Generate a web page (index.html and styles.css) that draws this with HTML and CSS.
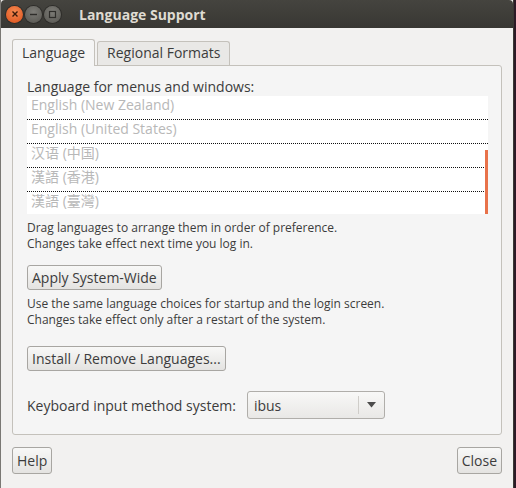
FILE: index.html
```html
<!DOCTYPE html>
<html lang="en">
<head>
    <meta charset="UTF-8">
    <title>Language Support</title>
    <link rel="stylesheet" href="styles.css">
</head>
<body>
    <div class="window">
        <div class="titlebar">
            <div class="controls">
                <span class="ctl close"><svg width="8" height="8" viewBox="0 0 8 8"><path d="M1.5 1.5 L6.5 6.5 M6.5 1.5 L1.5 6.5" stroke="#3a1a0a" stroke-width="1.4"/></svg></span>
                <span class="ctl"><svg width="9" height="9" viewBox="0 0 9 9"><path d="M1 4.5 H8" stroke="#2e2d2a" stroke-width="1.4"/></svg></span>
                <span class="ctl"><svg width="9" height="9" viewBox="0 0 9 9"><rect x="1.5" y="1.5" width="6" height="6" fill="none" stroke="#2e2d2a" stroke-width="1.2"/></svg></span>
            </div>
            <span class="title">Language Support</span>
        </div>

        <div class="content">
            <div class="tabs">
                <div class="tab active">Language</div>
                <div class="tab">Regional Formats</div>
            </div>

            <div class="panel">
                <p class="label">Language for menus and windows:</p>
                <div class="langlist">
                    <div class="row">English (New Zealand)</div>
                    <div class="row">English (United States)</div>
                    <div class="row cjk">汉语 (中国)</div>
                    <div class="row cjk">漢語 (香港)</div>
                    <div class="row cjk last">漢語 (臺灣)</div>
                    <div class="scroll"></div>
                </div>

                <p class="note">Drag languages to arrange them in order of preference.<br>Changes take effect next time you log in.</p>

                <div class="btnrow apply"><button class="btn">Apply System-Wide</button></div>

                <p class="note">Use the same language choices for startup and the login screen.<br>Changes take effect only after a restart of the system.</p>

                <div class="btnrow install"><button class="btn">Install / Remove Languages...</button></div>

                <div class="keyboard">
                    <span>Keyboard input method system:</span>
                    <div class="combo">
                        <span class="value">ibus</span>
                        <span class="arrow"><svg width="9" height="6" viewBox="0 0 9 6"><path d="M0 0 H9 L4.5 5.5 Z" fill="#4c4c4c"/></svg></span>
                    </div>
                </div>
            </div>

            <div class="footer">
                <button class="btn small">Help</button>
                <button class="btn small">Close</button>
            </div>
        </div>
    </div>
</body>
</html>
```

FILE: styles.css
```css
* {
    margin: 0;
    padding: 0;
    box-sizing: border-box;
}

body {
    width: 516px;
    height: 488px;
    background: #2c1a26;
    font-family: 'Open Sans', 'Noto Sans CJK SC', sans-serif;
    color: #3c3c3c;
    overflow: hidden;
}

.window {
    width: 514px;
    height: 488px;
    background: #f2f1f0;
    border-left: 1px solid #7a7874;
    border-right: 1px solid #3a3935;
    display: flex;
    flex-direction: column;
}

.titlebar {
    height: 28px;
    background: linear-gradient(#45443f, #383733);
    display: flex;
    align-items: center;
    padding-left: 5px;
    border-radius: 4px 4px 0 0;
}

.controls {
    display: flex;
    gap: 2px;
}

.ctl {
    width: 17px;
    height: 17px;
    border-radius: 50%;
    background: radial-gradient(circle at 50% 35%, #7d7c77, #55544f);
    display: flex;
    justify-content: center;
    align-items: center;
    box-shadow: 0 0 0 1px #2e2d2a;
}

.ctl.close {
    background: radial-gradient(circle at 50% 35%, #f58a52, #dc4f19);
}

.title {
    margin-left: 18px;
    color: #dfdbd2;
    font-weight: bold;
    font-size: 14px;
}

.content {
    flex: 1;
    padding: 11px 11px 0 11px;
}

.tabs {
    display: flex;
    align-items: flex-end;
    height: 26px;
    gap: 2px;
}

.tab {
    font-size: 14px;
    padding: 0 9px;
    height: 24px;
    line-height: 22px;
    border: 1px solid #c4c1bb;
    border-bottom: none;
    border-radius: 3px 3px 0 0;
    background: #e9e8e6;
}

.tab.active {
    height: 27px;
    line-height: 26px;
    background: #f5f5f5;
    margin-bottom: -1px;
    position: relative;
    z-index: 1;
}

.panel {
    height: 370px;
    background: #f5f5f5;
    border: 1px solid #c4c1bb;
    border-radius: 0 3px 3px 3px;
    padding: 12px 13px 0 14px;
}

.label {
    font-size: 14px;
    line-height: 18px;
}

.langlist {
    position: relative;
    background: #fff;
    width: 461px;
}

.row {
    height: 24px;
    line-height: 18px;
    padding-left: 4px;
    font-size: 14px;
    color: #b8b8b8;
    border-bottom: 1px dotted #111;
}

.row.last {
    border-bottom: none;
    height: 22px;
}

.scroll {
    position: absolute;
    right: 0;
    top: 54px;
    width: 3px;
    bottom: 0;
    background: #e8724a;
}

.note {
    font-size: 12px;
    line-height: 16px;
    margin-top: 6px;
}

.btnrow {
    display: flex;
}

.btn {
    font-family: inherit;
    font-size: 14px;
    color: #3c3c3c;
    background: linear-gradient(#f8f8f7, #e4e3e1);
    border: 1px solid #a8a6a2;
    border-radius: 3px;
    height: 25px;
    padding: 0 4px;
}

.apply {
    margin-top: 13px;
}

.note + .install {
    margin-top: 18px;
}

.keyboard {
    display: flex;
    align-items: center;
    margin-top: 20px;
    font-size: 14px;
    gap: 11px;
}

.combo {
    width: 138px;
    height: 28px;
    border: 1px solid #b0aeaa;
    border-radius: 3px;
    background: linear-gradient(#f8f8f7, #e9e8e6);
    display: flex;
    align-items: center;
}

.combo .value {
    flex: 1;
    padding-left: 6px;
}

.combo .arrow {
    width: 26px;
    height: 18px;
    border-left: 1px solid #cfcdc9;
    display: flex;
    justify-content: center;
    align-items: center;
}

.footer {
    display: flex;
    justify-content: space-between;
    margin-top: 12px;
}

.small {
    height: 27px;
}
```
